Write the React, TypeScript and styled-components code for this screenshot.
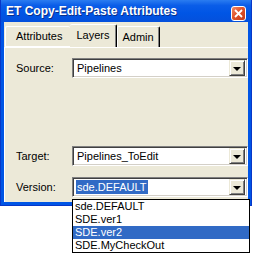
import React from 'react'
import styled, { createGlobalStyle } from 'styled-components'

const GlobalStyle = createGlobalStyle`
  html, body {
    margin: 0;
    padding: 0;
    background: #fff;
  }
  body {
    font-family: "Liberation Sans", Arial, sans-serif;
    font-size: 11px;
  }
`

const Page = styled.div`
  width: 254px;
  height: 254px;
  position: relative;
`

const Window = styled.div`
  width: 252px;
  height: 206px;
  display: flex;
  flex-direction: column;
  background: #0055e5;
  box-sizing: border-box;
  border: 1px solid #0837c8;
  border-top: none;
`

const TitleBar = styled.div`
  height: 22px;
  flex: none;
  display: flex;
  align-items: center;
  justify-content: space-between;
  padding: 0 5px 0 5px;
  background: linear-gradient(to bottom, #2a7cf0 0%, #0a5de8 25%, #0055e5 60%, #0450dc 100%);
  color: #fff;
  font-weight: bold;
  font-size: 12px;
  text-shadow: 1px 1px 0 #0a2f8a;
`

const CloseButton = styled.div`
  width: 13px;
  height: 13px;
  margin-top: 4px;
  border: 1px solid #fff;
  border-radius: 3px;
  background: linear-gradient(135deg, #f08a68 0%, #e0542a 45%, #c2391a 100%);
  display: flex;
  align-items: center;
  justify-content: center;
`

const Body = styled.div`
  flex: 1;
  margin: 0 3px 3px 3px;
  background: #ece9d8;
  display: flex;
  flex-direction: column;
  padding-top: 2px;
`

const TabStrip = styled.div`
  height: 23px;
  display: flex;
  align-items: flex-end;
  padding-left: 1px;
`

const Tab = styled.div<{ $active?: boolean }>`
  height: ${(p) => (p.$active ? 23 : 21)}px;
  padding: 0 ${(p) => (p.$active ? 6 : 5)}px;
  box-sizing: border-box;
  display: flex;
  align-items: center;
  padding-bottom: ${(p) => (p.$active ? 3 : 1)}px;
  color: #000;
  background: #ece9d8;
  border-top: 1px solid #fff;
  border-left: ${(p) => (p.$active ? 'none' : '1px solid #fff')};
  border-right: 1px solid #000;
  box-shadow: inset -1px 0 #808080;
  border-top-left-radius: 2px;
  border-top-right-radius: 2px;
  &:first-child {
    border-right: none;
    box-shadow: none;
    border-bottom: 1px solid #fff;
    padding-right: 8px;
    padding-left: 10px;
  }
`

const TabPage = styled.div`
  flex: 1;
  display: flex;
  flex-direction: column;
  padding: 10px 0 5px 11px;
  border-top: 1px solid #fff;
  border-left: 1px solid #fff;
`

const Row = styled.div<{ $gapTop?: number }>`
  display: flex;
  align-items: center;
  margin-top: ${(p) => p.$gapTop ?? 0}px;
`

const Label = styled.div`
  width: 56px;
  color: #000;
`

const Spacer = styled.div`
  flex: 1;
`

const Combo = styled.div`
  position: relative;
  width: 176px;
  height: 20px;
  box-sizing: border-box;
  display: flex;
  align-items: center;
  background: #fff;
  border: 1px solid;
  border-color: #808080 #fff #fff #808080;
  box-shadow: inset 1px 1px #404040, inset -1px -1px #d4d0c8;
  padding: 2px 2px 2px 3px;
`

const Value = styled.span<{ $selected?: boolean }>`
  flex: 1;
  display: flex;
  span {
    padding: 1px 1px;
    background: ${(p) => (p.$selected ? '#316ac5' : 'transparent')};
    color: ${(p) => (p.$selected ? '#fff' : '#000')};
  }
`

const ArrowButton = styled.div`
  width: 16px;
  height: 16px;
  box-sizing: border-box;
  background: #ece9d8;
  border: 1px solid;
  border-color: #ece9d8 #404040 #404040 #ece9d8;
  box-shadow: inset 1px 1px #fff, inset -1px -1px #808080;
  display: flex;
  align-items: center;
  justify-content: center;
  &::after {
    content: '';
    border-left: 4px solid transparent;
    border-right: 4px solid transparent;
    border-top: 4px solid #000;
    margin-top: 1px;
  }
`

const DropList = styled.div`
  position: absolute;
  top: 21px;
  left: -1px;
  width: 178px;
  box-sizing: border-box;
  background: #fff;
  border: 1px solid #000;
  z-index: 2;
`

const Item = styled.div<{ $active?: boolean }>`
  height: 13px;
  line-height: 13px;
  padding-left: 2px;
  background: ${(p) => (p.$active ? '#316ac5' : '#fff')};
  color: ${(p) => (p.$active ? '#fff' : '#000')};
`

const versions = ['sde.DEFAULT', 'SDE.ver1', 'SDE.ver2', 'SDE.MyCheckOut']

function ComboBox({ value, selected, children }: { value: string; selected?: boolean; children?: React.ReactNode }) {
  return (
    <Combo>
      <Value $selected={selected}><span>{value}</span></Value>
      <ArrowButton />
      {children}
    </Combo>
  )
}

export default function App() {
  return (
    <Page>
      <GlobalStyle />
      <Window>
        <TitleBar>
          <span>ET Copy-Edit-Paste Attributes</span>
          <CloseButton>
            <svg width='9' height='9' viewBox='0 0 9 9'>
              <path d='M1 1 L8 8 M8 1 L1 8' stroke='#fff' strokeWidth='1.8' />
            </svg>
          </CloseButton>
        </TitleBar>
        <Body>
          <TabStrip>
            <Tab>Attributes</Tab>
            <Tab $active>Layers</Tab>
            <Tab>Admin</Tab>
          </TabStrip>
          <TabPage>
            <Row>
              <Label>Source:</Label>
              <ComboBox value='Pipelines' />
            </Row>
            <Spacer />
            <Row>
              <Label>Target:</Label>
              <ComboBox value='Pipelines_ToEdit' />
            </Row>
            <Row $gapTop={11}>
              <Label>Version:</Label>
              <ComboBox value='sde.DEFAULT' selected>
                <DropList>
                  {versions.map((v) => (
                    <Item key={v} $active={v === 'SDE.ver2'}>{v}</Item>
                  ))}
                </DropList>
              </ComboBox>
            </Row>
          </TabPage>
        </Body>
      </Window>
    </Page>
  )
}
